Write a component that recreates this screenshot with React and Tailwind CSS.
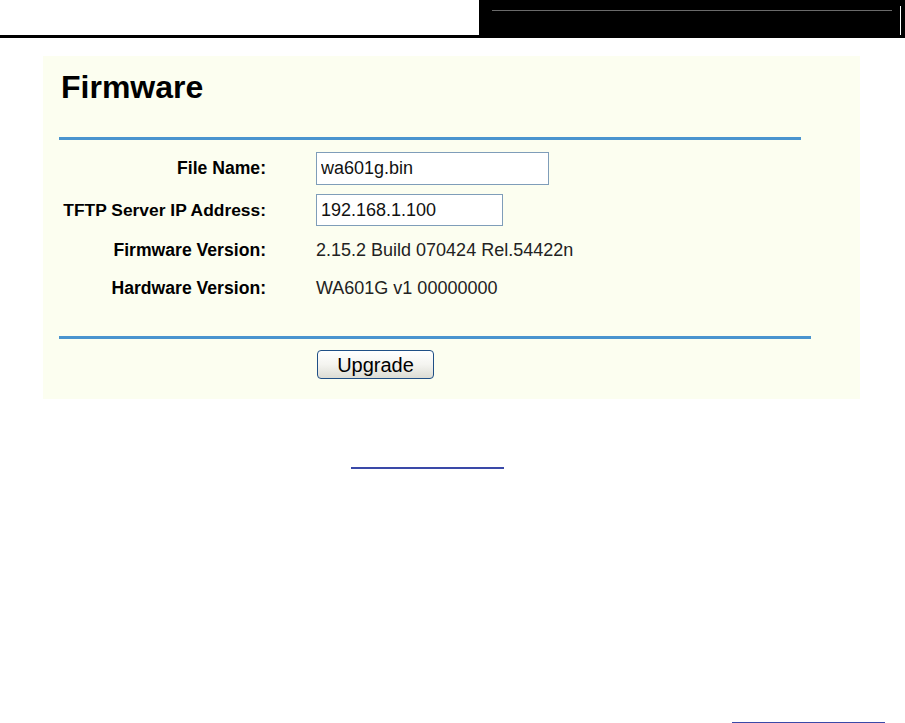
export default function App() {
  const font = { fontFamily: '"Liberation Sans", Arial, sans-serif' };
  return (
    <div className="w-[905px] h-[723px] bg-white overflow-hidden" style={font}>
      {/* header */}
      <div className="flex h-[38px]">
        <div className="flex-1 flex flex-col justify-end">
          <div className="h-[3px] bg-black" />
        </div>
        <div className="w-[426px] bg-black flex pl-[13px] pr-[4px]">
          <div className="w-[400px] h-px bg-[#6a6a6a] mt-[10px]" />
          <div className="w-px h-[29px] bg-white mt-[6px] ml-[8px]" />
        </div>
      </div>

      {/* panel */}
      <div className="ml-[43px] mt-[18px] w-[817px] h-[343px] bg-[#fcfef0] flex flex-col pt-[15px]">
        <div className="ml-[18px] text-[32px] leading-[32px] font-bold text-black">Firmware</div>
        <div className="ml-[16px] mt-[34px] w-[742px] h-[3px] bg-[#4a94cf]" />

        <div className="flex flex-col mt-[12px] text-[18px] text-black">
          <div className="flex items-center h-[33px]">
            <div className="w-[223px] text-right font-bold text-[17.6px]">File Name:</div>
            <input
              readOnly
              value="wa601g.bin"
              className="ml-[50px] w-[233px] h-[33px] border border-[#7f9db9] bg-white pl-[4px] text-[18px] text-[#111] outline-none"
              style={font}
            />
          </div>
          <div className="flex items-center h-[32px] mt-[9px]">
            <div className="w-[223px] text-right font-bold whitespace-nowrap text-[17.4px]">TFTP Server IP Address:</div>
            <input
              readOnly
              value="192.168.1.100"
              className="ml-[50px] w-[187px] h-[32px] border border-[#7f9db9] bg-white pl-[4px] text-[18px] text-[#111] outline-none"
              style={font}
            />
          </div>
          <div className="flex items-center h-[32px] mt-[8px]">
            <div className="w-[223px] text-right font-bold text-[17.6px]">Firmware Version:</div>
            <div className="ml-[50px] text-[#222]">2.15.2 Build 070424 Rel.54422n</div>
          </div>
          <div className="flex items-center h-[32px] mt-[6px]">
            <div className="w-[223px] text-right font-bold text-[17.6px]">Hardware Version:</div>
            <div className="ml-[50px] text-[#222]">WA601G v1 00000000</div>
          </div>
        </div>

        <div className="ml-[16px] mt-[32px] w-[752px] h-[3px] bg-[#4a94cf]" />
        <div className="mt-[11px] ml-[274px]">
          <button
            className="w-[117px] h-[29px] rounded-[4px] border border-[#1f4f86] bg-gradient-to-b from-white via-[#f4f4f0] to-[#dcdcd4] text-[20px] leading-none text-black flex items-center justify-center"
            style={font}
          >
            Upgrade
          </button>
        </div>
      </div>

      <div className="ml-[351px] mt-[68px] w-[153px] h-[2px] bg-[#3a49a8]" />
      <div className="ml-[732px] mt-[253px] w-[153px] h-[2px] bg-[#3a49a8]" />
    </div>
  );
}
